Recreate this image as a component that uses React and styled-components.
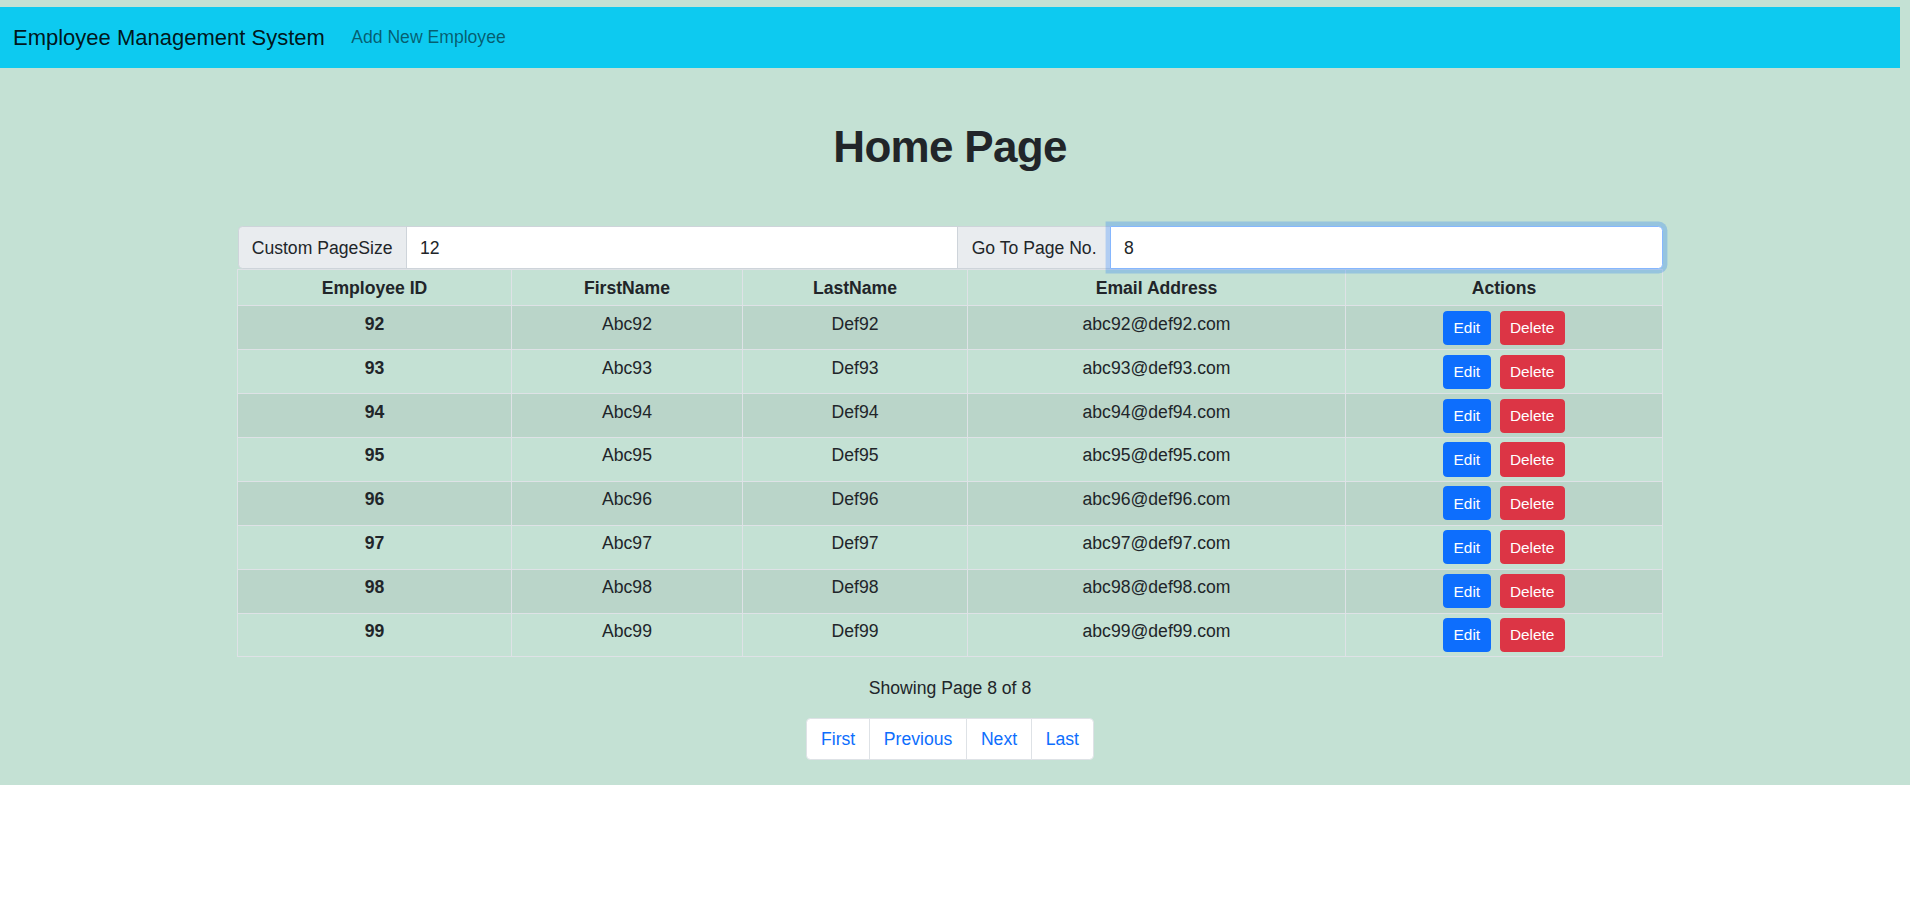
import styled, { createGlobalStyle } from 'styled-components'

const GlobalStyle = createGlobalStyle`
  html, body {
    margin: 0;
    padding: 0;
    background: #ffffff;
  }
  body {
    font-family: "Liberation Sans", Arial, sans-serif;
    font-size: 17.6px;
    line-height: 1.5;
    color: #212529;
  }
  * {
    box-sizing: border-box;
  }
`

const Page = styled.div`
  background: #c4e1d4;
  padding: 7px 10px 7.5px 0;
`

const Navbar = styled.nav`
  display: flex;
  align-items: center;
  height: 61px;
  padding: 0 13px;
  background: #0dcaf0;
`

const Brand = styled.a`
  font-size: 22px;
  color: rgba(0, 0, 0, 0.9);
  text-decoration: none;
  margin-right: 17.6px;
  white-space: nowrap;
`

const NavLink = styled.a`
  padding: 0 8.8px;
  color: rgba(0, 0, 0, 0.55);
  text-decoration: none;
`

const Title = styled.h1`
  margin: 52.8px 0;
  font-size: 44px;
  font-weight: 700;
  line-height: 1.2;
  letter-spacing: -0.7px;
  text-align: center;
`

const InputGroup = styled.div`
  display: flex;
  width: 75%;
  margin: 0 auto;
`

const GroupLabel = styled.span`
  display: flex;
  align-items: center;
  padding: 7.2px 13.2px;
  background: #e9ecef;
  border: 1px solid #ced4da;
  white-space: nowrap;
  margin-left: ${p => (p.first ? '0' : '-1px')};
  border-radius: ${p => (p.first ? '4.4px 0 0 4.4px' : '0')};
`

const GroupInput = styled.input`
  position: relative;
  flex: 1 1 auto;
  width: 1%;
  margin-left: -1px;
  padding: 7.2px 13.2px;
  font: inherit;
  color: #212529;
  background: #ffffff;
  border: 1px solid ${p => (p.focused ? '#86b7fe' : '#ced4da')};
  border-radius: ${p => (p.last ? '0 4.4px 4.4px 0' : '0')};
  box-shadow: ${p => (p.focused ? '0 0 0 4.4px rgba(13, 110, 253, 0.25)' : 'none')};
  z-index: ${p => (p.focused ? 3 : 1)};
  outline: none;
`

const Table = styled.table`
  width: 75%;
  margin: 0 auto 17.6px;
  border-collapse: collapse;
  table-layout: fixed;
  border: 1px solid #dee2e6;
`

const Th = styled.th`
  padding: 4.4px;
  border: 1px solid #dee2e6;
  font-weight: 700;
  text-align: center;
  vertical-align: top;
`

const Row = styled.tr`
  background: ${p => (p.striped ? 'rgba(0, 0, 0, 0.05)' : 'transparent')};
`

const Td = styled.td`
  padding: 4.4px;
  border: 1px solid #dee2e6;
  text-align: center;
  vertical-align: top;
  font-weight: ${p => (p.bold ? 700 : 400)};
  white-space: nowrap;
`

const SmallButton = styled.button`
  display: inline-block;
  vertical-align: top;
  margin: 0 4.5px;
  padding: 4.5px 9.4px;
  font-family: inherit;
  font-size: 15.4px;
  line-height: 1.5;
  color: #ffffff;
  background: ${p => (p.variant === 'danger' ? '#dc3545' : '#0d6efd')};
  border: 1px solid ${p => (p.variant === 'danger' ? '#dc3545' : '#0d6efd')};
  border-radius: 3.8px;
  cursor: pointer;
`

const Status = styled.p`
  margin: 0 0 16.5px;
  text-align: center;
`

const Pagination = styled.ul`
  display: flex;
  justify-content: center;
  list-style: none;
  margin: 0 0 17.6px;
  padding: 0;
`

const PageLink = styled.a`
  display: block;
  padding: 6.8px 13.8px;
  margin-left: ${p => (p.first ? '0' : '-1px')};
  color: #0d6efd;
  background: #ffffff;
  border: 1px solid #dee2e6;
  text-decoration: none;
  border-radius: ${p => (p.first ? '4.4px 0 0 4.4px' : p.last ? '0 4.4px 4.4px 0' : '0')};
`

const columns = [
  { label: 'Employee ID', width: 274 },
  { label: 'FirstName', width: 231 },
  { label: 'LastName', width: 225 },
  { label: 'Email Address', width: 378 },
  { label: 'Actions', width: 317 },
]

const employees = [92, 93, 94, 95, 96, 97, 98, 99].map(n => ({
  id: n,
  first: `Abc${n}`,
  last: `Def${n}`,
  email: `abc${n}@def${n}.com`,
}))

const pages = ['First', 'Previous', 'Next', 'Last']

export default function App() {
  return (
    <>
      <GlobalStyle />
      <Page>
        <Navbar>
          <Brand href="#">Employee Management System</Brand>
          <NavLink href="#">Add New Employee</NavLink>
        </Navbar>

        <Title>Home Page</Title>

        <InputGroup>
          <GroupLabel first>Custom PageSize</GroupLabel>
          <GroupInput type="text" defaultValue="12" />
          <GroupLabel>Go To Page No.</GroupLabel>
          <GroupInput type="text" defaultValue="8" last focused />
        </InputGroup>

        <Table>
          <colgroup>
            {columns.map(c => (
              <col key={c.label} style={{ width: c.width }} />
            ))}
          </colgroup>
          <thead>
            <tr>
              {columns.map(c => (
                <Th key={c.label}>{c.label}</Th>
              ))}
            </tr>
          </thead>
          <tbody>
            {employees.map((e, i) => (
              <Row key={e.id} striped={i % 2 === 0}>
                <Td bold>{e.id}</Td>
                <Td>{e.first}</Td>
                <Td>{e.last}</Td>
                <Td>{e.email}</Td>
                <Td>
                  <SmallButton>Edit</SmallButton>
                  <SmallButton variant="danger">Delete</SmallButton>
                </Td>
              </Row>
            ))}
          </tbody>
        </Table>

        <Status>Showing Page 8 of 8</Status>

        <Pagination>
          {pages.map((p, i) => (
            <li key={p}>
              <PageLink href="#" first={i === 0} last={i === pages.length - 1}>
                {p}
              </PageLink>
            </li>
          ))}
        </Pagination>
      </Page>
    </>
  )
}
